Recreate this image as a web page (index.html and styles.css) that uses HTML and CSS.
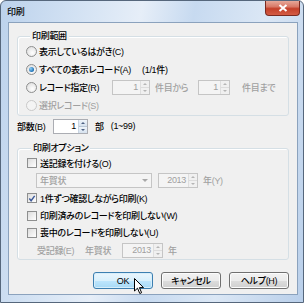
FILE: index.html
```html
<!DOCTYPE html>
<html>

<head>
    <meta charset="utf-8">
    <link rel="stylesheet" href="styles.css">
</head>

<body>
    <div class="window">
        <div class="titlebar">
            <span class="title">印刷</span>
            <div class="close-btn">
                <svg width="10" height="8" viewBox="0 0 10 8">
                    <path d="M1.5 1 L8.5 7 M8.5 1 L1.5 7" stroke="#fff" stroke-width="2" />
                </svg>
            </div>
        </div>
        <div class="client">
            <div class="group range-group">
                <div class="group-title">印刷範囲</div>
                <div class="row">
                    <span class="radio"></span>
                    <span>表示しているはがき(C)</span>
                </div>
                <div class="row">
                    <span class="radio checked"></span>
                    <span class="label-all">すべての表示レコード(A)</span>
                    <span>(1/1件)</span>
                </div>
                <div class="row">
                    <span class="radio"></span>
                    <span class="label-range">レコード指定(R)</span>
                    <div class="spin disabled">
                        <span class="spin-value">1</span>
                        <span class="spin-btns"><i class="up"></i><i class="down"></i></span>
                    </div>
                    <span class="muted after-spin">件目から</span>
                    <div class="spin disabled to-spin">
                        <span class="spin-value">1</span>
                        <span class="spin-btns"><i class="up"></i><i class="down"></i></span>
                    </div>
                    <span class="muted after-spin wide">件目まで</span>
                </div>
                <div class="row muted">
                    <span class="radio disabled"></span>
                    <span>選択レコード(S)</span>
                </div>
            </div>

            <div class="copies-row">
                <span class="copies-label">部数(B)</span>
                <div class="spin copies-spin">
                    <span class="spin-value">1</span>
                    <span class="spin-btns"><i class="up"></i><i class="down"></i></span>
                </div>
                <span class="copies-unit">部</span>
                <span>(1~99)</span>
            </div>

            <div class="group options-group">
                <div class="group-title">印刷オプション</div>
                <div class="row">
                    <span class="check"></span>
                    <span>送記録を付ける(O)</span>
                </div>
                <div class="row combo-row">
                    <div class="combo">
                        <span>年賀状</span>
                        <span class="combo-arrow"></span>
                    </div>
                    <div class="spin disabled year-spin">
                        <span class="spin-value">2013</span>
                        <span class="spin-btns"><i class="up"></i><i class="down"></i></span>
                    </div>
                    <span class="muted year-label">年(Y)</span>
                </div>
                <div class="row">
                    <span class="check checked">
                        <svg width="9" height="9" viewBox="0 0 9 9">
                            <path d="M1.5 4.5 L3.5 7 L7.5 1.5" fill="none" stroke="#3d5a99" stroke-width="1.6" />
                        </svg>
                    </span>
                    <span>1件ずつ確認しながら印刷(K)</span>
                </div>
                <div class="row short">
                    <span class="check"></span>
                    <span>印刷済みのレコードを印刷しない(W)</span>
                </div>
                <div class="row short">
                    <span class="check"></span>
                    <span>喪中のレコードを印刷しない(U)</span>
                </div>
                <div class="row muted received-row">
                    <span class="received-label">受記録(E)</span>
                    <span class="received-kind">年賀状</span>
                    <div class="spin disabled received-spin">
                        <span class="spin-value">2013</span>
                        <span class="spin-btns"><i class="up"></i><i class="down"></i></span>
                    </div>
                    <span class="year-label">年</span>
                </div>
            </div>

            <div class="button-row">
                <button class="btn default">OK
                    <svg class="cursor" width="11" height="17" viewBox="0 0 11 17">
                        <path d="M0.5 0.5 L0.5 13 L3.5 10.2 L5.8 15.5 L7.6 14.7 L5.4 9.6 L9.5 9.6 Z" fill="#fff" stroke="#000" stroke-width="1" />
                    </svg>
                </button>
                <button class="btn">キャンセル</button>
                <button class="btn">ヘルプ(H)</button>
            </div>
        </div>
    </div>
</body>

</html>
```

FILE: styles.css
```css
* {
    box-sizing: border-box;
}

body {
    margin: 0;
    background: #ffffff;
    font-family: "Liberation Sans", "Noto Sans CJK JP", sans-serif;
    font-size: 9px;
    font-weight: 500;
    letter-spacing: -0.3px;
    font-feature-settings: "palt";
    color: #000;
}

.window {
    width: 304px;
    height: 303px;
    border: 1px solid #56677c;
    border-radius: 6px 6px 0 0;
    padding: 0 5px 7px 7px;
    display: flex;
    flex-direction: column;
    background: linear-gradient(100deg, #bcd2ec 0%, #d6e4f4 25%, #e6eef8 40%, #c7daf0 55%, #dbe7f5 75%, #b9cfea 100%);
}

.titlebar {
    height: 21px;
    display: flex;
    justify-content: space-between;
    align-items: flex-start;
}

.title {
    margin-top: 5px;
    margin-left: -1px;
    line-height: 12px;
}

.close-btn {
    width: 35px;
    height: 15px;
    margin-right: -2px;
    border: 1px solid #7a2a20;
    border-top: none;
    border-radius: 0 0 4px 4px;
    background: linear-gradient(#e6a899 0%, #d87a68 40%, #c4402a 55%, #d45c44 100%);
    display: flex;
    justify-content: center;
    align-items: center;
}

.client {
    flex: 1;
    background: #f0f0f0;
    border: 1px solid #8ba2bd;
    padding: 13px 8px 4px 8px;
    display: flex;
    flex-direction: column;
}

.group {
    border: 1px solid #d5dfe5;
    border-radius: 3px;
    box-shadow: inset 1px 1px 0 #fff;
}

.group-title {
    width: fit-content;
    height: 12px;
    line-height: 12px;
    margin: -7px 0 0 4px;
    padding: 0 2px;
    background: #f0f0f0;
}

.range-group {
    padding: 0 8px 1px 8px;
}

.row {
    height: 18px;
    display: flex;
    align-items: center;
    white-space: nowrap;
}

.row.short {
    height: 17px;
}

.muted {
    color: #a0a0a0;
}

.radio {
    flex: none;
    width: 11px;
    height: 11px;
    margin-right: 2px;
    border-radius: 50%;
    border: 1px solid #8e8f8f;
    background: radial-gradient(circle at 60% 65%, #ffffff 0%, #e8e8e8 60%, #d6d6d6 100%);
    display: flex;
    justify-content: center;
    align-items: center;
}

.radio.checked::after {
    content: '';
    width: 5px;
    height: 5px;
    border-radius: 50%;
    background: radial-gradient(circle at 35% 35%, #8fd0f7, #1b6fb4 70%, #0e4e8e);
}

.radio.disabled {
    border-color: #c9c9c9;
    background: #f4f4f4;
}

.label-all {
    flex: none;
    width: 103px;
}

.label-range {
    flex: none;
    width: 73px;
}

.spin {
    flex: none;
    width: 38px;
    height: 15px;
    border: 1px solid #abadb3;
    background: #fff;
    display: flex;
}

.spin-value {
    flex: 1;
    text-align: right;
    padding-right: 2px;
    line-height: 13px;
}

.spin-btns {
    width: 9px;
    display: flex;
    flex-direction: column;
    border-left: 1px solid #c9d5e2;
}

.spin-btns i {
    flex: 1;
    display: flex;
    justify-content: center;
    align-items: center;
    background: linear-gradient(#eef4fa, #d6e2ef);
}

.spin-btns i + i {
    border-top: 1px solid #b9c7d6;
}

.spin-btns .up::after {
    content: '';
    border: 2px solid transparent;
    border-bottom: 2px solid #4d6182;
    border-top: none;
}

.spin-btns .down::after {
    content: '';
    border: 2px solid transparent;
    border-top: 2px solid #4d6182;
    border-bottom: none;
}

.spin.disabled {
    border-color: #c5c5c5;
    background: #f4f4f4;
    color: #a0a0a0;
}

.spin.disabled .spin-btns {
    border-left-color: #dedede;
}

.spin.disabled .spin-btns i {
    background: #f0f0f0;
}

.spin.disabled .spin-btns i + i {
    border-top-color: #dcdcdc;
}

.spin.disabled .spin-btns .up::after {
    border-bottom-color: #b5b5b5;
}

.spin.disabled .spin-btns .down::after {
    border-top-color: #b5b5b5;
}

.after-spin {
    flex: none;
    margin-left: 5px;
    width: 43px;
}

.after-spin.wide {
    margin-left: 12px;
}

.to-spin {
    width: 32px;
}

.copies-row {
    height: 18px;
    margin-top: 1px;
    display: flex;
    align-items: center;
}

.copies-label {
    width: 36px;
}

.copies-spin {
    width: 35px;
}

.copies-unit {
    margin: 0 7px 0 7px;
}

.options-group {
    margin-top: 13px;
    padding: 0 8px 0 9px;
}

.check {
    flex: none;
    width: 10px;
    height: 10px;
    margin-right: 3px;
    border: 1px solid #8e8f8f;
    background: linear-gradient(135deg, #dcdcdc, #ffffff);
    display: flex;
    justify-content: center;
    align-items: center;
}

.check svg {
    display: block;
}

.combo-row {
    height: 17px;
    padding-left: 9px;
}

.combo {
    flex: none;
    width: 116px;
    height: 15px;
    border: 1px solid #c5c5c5;
    background: #f4f4f4;
    color: #a0a0a0;
    padding-left: 3px;
    display: flex;
    justify-content: space-between;
    align-items: center;
}

.combo-arrow {
    width: 12px;
    display: flex;
    justify-content: center;
}

.combo-arrow::after {
    content: '';
    border: 3px solid transparent;
    border-top: 3px solid #a8a8a8;
    border-bottom: none;
}

.year-spin {
    margin-left: 6px;
    width: 40px;
}

.year-label {
    margin-left: 5px;
}

.received-row {
    padding-left: 10px;
}

.received-label {
    flex: none;
    width: 48px;
}

.received-kind {
    flex: none;
    width: 37px;
}

.received-spin {
    width: 41px;
}

.button-row {
    margin-top: 12px;
    display: flex;
    justify-content: flex-end;
    gap: 8px;
}

.btn {
    position: relative;
    width: 60px;
    height: 17px;
    padding: 0;
    border: 1px solid #707070;
    border-radius: 3px;
    font-family: inherit;
    font-size: 9px;
    font-weight: 500;
    letter-spacing: -0.3px;
    font-feature-settings: "palt";
    color: #000;
    background: linear-gradient(#f2f2f2 0%, #ebebeb 50%, #dddddd 51%, #cfcfcf 100%);
    box-shadow: inset 0 0 0 1px #fcfcfc;
}

.btn.default {
    border-color: #3c7fb1;
    background: linear-gradient(#eaf6fd 0%, #d9f0fc 50%, #bee6fd 51%, #a7d9f5 100%);
    box-shadow: inset 0 0 0 1px #d8eefa;
}

.cursor {
    position: absolute;
    left: 40px;
    top: 5px;
}
```
